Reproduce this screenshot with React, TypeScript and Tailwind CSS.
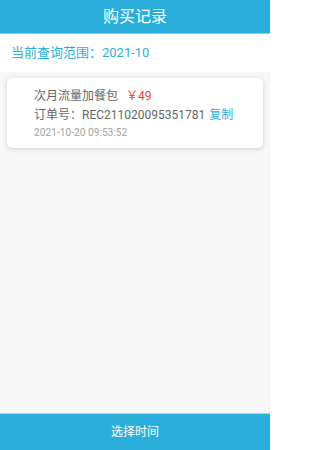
export default function App() {
  const font = { fontFamily: '"Roboto", "Noto Sans CJK SC", sans-serif' };
  return (
    <div className="w-[270px] h-[450px] flex flex-col bg-[#f7f7f7]" style={font}>
      {/* 标题栏 */}
      <header className="h-[34px] shrink-0 flex items-center justify-center bg-[#2aaedc] border-b border-[#7fd0ee]">
        <span className="text-white text-[16px] leading-none">购买记录</span>
      </header>

      {/* 查询范围 */}
      <div className="h-[38px] shrink-0 bg-white flex items-center px-[11px]">
        <span className="text-[#2aaedc] text-[13px]">当前查询范围：2021-10</span>
      </div>

      {/* 列表 */}
      <main className="grow px-[7px] pt-[6px]">
        <div className="bg-white rounded-[5px] shadow-[0_1px_5px_rgba(0,0,0,0.18)] pl-[27px] pr-2 pt-[8px] pb-[6px]">
          <div className="flex items-center gap-[8px] h-[20px]">
            <span className="text-[#666] text-[12px]">次月流量加餐包</span>
            <span className="text-[#f23c3c] text-[12px]">￥49</span>
          </div>
          <div className="flex items-center gap-[4px] h-[18px]">
            <span className="text-[#666] text-[12px]">订单号：REC211020095351781</span>
            <span className="text-[#2aaedc] text-[12px]">复制</span>
          </div>
          <div className="h-[18px] flex items-center">
            <span className="text-[#a3a3a3] text-[10.2px]">2021-10-20 09:53:52</span>
          </div>
        </div>
      </main>

      {/* 底部按钮 */}
      <button className="h-[37px] shrink-0 w-full bg-[#2aaedc] border-t border-[#9fdaf0] text-white text-[12px] flex items-center justify-center">
        选择时间
      </button>
    </div>
  );
}
